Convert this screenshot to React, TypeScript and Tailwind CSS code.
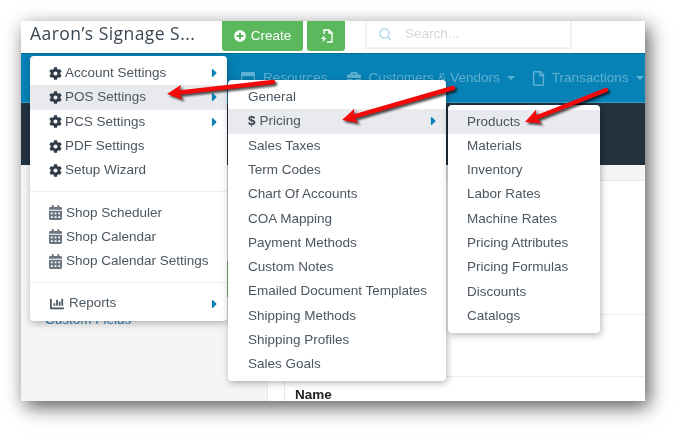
import type { ReactNode } from 'react'
import { FaCog, FaCalendarAlt, FaChartBar, FaCaretRight, FaPlusCircle, FaBriefcase, FaRegFile, FaRegWindowMaximize } from 'react-icons/fa'
import { Search } from 'lucide-react'

type Row = { label: string; icon?: ReactNode; sub?: boolean; active?: boolean } | 'divider'

const cog = <FaCog className="w-[13px] h-[13px] mr-[3px]" />
const cal = <FaCalendarAlt className="w-[13px] h-[15px] mr-[4px] text-[#6b7580]" />

const accountMenu: Row[] = [
  { label: 'Account Settings', icon: cog, sub: true },
  { label: 'POS Settings', icon: cog, sub: true, active: true },
  { label: 'PCS Settings', icon: cog, sub: true },
  { label: 'PDF Settings', icon: cog },
  { label: 'Setup Wizard', icon: cog },
  'divider',
  { label: 'Shop Scheduler', icon: cal },
  { label: 'Shop Calendar', icon: cal },
  { label: 'Shop Calendar Settings', icon: cal },
  'divider',
  { label: 'Reports', icon: <FaChartBar className="w-[16px] h-[14px] mr-[4px] text-[#4a5560]" />, sub: true },
]

const posMenu: Row[] = [
  { label: 'General' },
  { label: 'Pricing', icon: <span className="mr-[4px] font-bold text-[#2f3b47]">$</span>, sub: true, active: true },
  { label: 'Sales Taxes' },
  { label: 'Term Codes' },
  { label: 'Chart Of Accounts' },
  { label: 'COA Mapping' },
  { label: 'Payment Methods' },
  { label: 'Custom Notes' },
  { label: 'Emailed Document Templates' },
  { label: 'Shipping Methods' },
  { label: 'Shipping Profiles' },
  { label: 'Sales Goals' },
]

const pricingMenu: Row[] = [
  { label: 'Products', active: true },
  { label: 'Materials' },
  { label: 'Inventory' },
  { label: 'Labor Rates' },
  { label: 'Machine Rates' },
  { label: 'Pricing Attributes' },
  { label: 'Pricing Formulas' },
  { label: 'Discounts' },
  { label: 'Catalogs' },
]

function Menu({ rows, className }: { rows: Row[]; className: string }) {
  return (
    <div className={`absolute bg-white rounded-[4px] shadow-[1px_2px_7px_rgba(0,0,0,0.3)] ${className}`}>
      {rows.map((row, i) =>
        row === 'divider' ? (
          <div key={i} className="h-px my-[8.5px] bg-[#eceef0]" />
        ) : (
          <div
            key={row.label}
            className={`h-[24.3px] flex items-center pl-[19px] pr-[8px] text-[13.5px] text-[#4b5661] ${row.active ? 'bg-[#e9eaee]' : ''}`}
          >
            <span className="flex items-center text-[#2f3b47]">{row.icon}</span>
            <span>{row.label}</span>
            {row.sub && <FaCaretRight className="ml-auto w-[9px] h-[14px] text-[#0a84b8]" />}
          </div>
        )
      )}
    </div>
  )
}

function Arrow({ x1, y1, x2, y2 }: { x1: number; y1: number; x2: number; y2: number }) {
  const len = Math.hypot(x2 - x1, y2 - y1)
  const ux = (x2 - x1) / len
  const uy = (y2 - y1) / len
  const bx = x2 - ux * 15
  const by = y2 - uy * 15
  const head = `${x2},${y2} ${bx - uy * 7.5},${by + ux * 7.5} ${bx + ux * 3},${by + uy * 3} ${bx + uy * 7.5},${by - ux * 7.5}`
  return (
    <g>
      <line x1={x1} y1={y1} x2={bx + ux * 2} y2={by + uy * 2} stroke="#f20a0a" strokeWidth="4.5" strokeLinecap="round" />
      <polygon points={head} fill="#f20a0a" />
    </g>
  )
}

function Caret() {
  return <span className="ml-[7px] inline-block border-x-[4px] border-x-transparent border-t-[4px] border-t-[#5fb0d2]" />
}

export default function App() {
  return (
    <div className="w-[687px] h-[443px] bg-white pl-[21px] pt-[21px] overflow-hidden font-['Liberation_Sans',Arial,sans-serif]">
      <div className="relative w-[624px] h-[380px] bg-white flex flex-col overflow-hidden blur-[0.35px] shadow-[4px_6px_18px_rgba(0,0,0,0.65)]">
        {/* Top bar */}
        <header className="h-[32px] flex items-start shrink-0">
          <div className="w-[201px] pl-[9px] text-[17.5px] leading-[24px] tracking-[0.45px] text-[#3a4753] font-['Open_Sans',sans-serif] whitespace-nowrap">
            Aaron’s Signage S...
          </div>
          <button className="w-[81px] h-[30px] bg-[#5cb85c] rounded-b-[3px] flex items-center justify-center gap-[5px] text-white text-[13.5px]">
            <FaPlusCircle className="w-[12px] h-[12px]" />
            Create
          </button>
          <button className="ml-[4px] w-[38px] h-[30px] bg-[#5cb85c] rounded-b-[3px] flex items-center justify-center">
            <svg width="14" height="14" viewBox="0 0 14 14" fill="none" stroke="white" strokeWidth="1.4">
              <path d="M5 5V1h5l3 3v9H8" />
              <path d="M10 1v3h3" />
              <path d="M5.5 6 2 10h2.5L3.5 13.5 7.5 9H5z" fill="white" stroke="none" />
            </svg>
          </button>
          <div className="ml-[20px] w-[207px] h-[28px] border-x-2 border-b-2 border-[#f0f1f2] flex items-center pl-[11px] text-[13.5px] text-[#d3d7db]">
            <Search className="w-[14px] h-[14px] text-[#b5dcec]" strokeWidth={2.5} />
            <span className="ml-[13px]">Search...</span>
          </div>
        </header>

        {/* Nav */}
        <nav className="h-[50px] shrink-0 bg-[#0782b6] border-t border-[#06709c] border-b border-b-[#3aa0c8] flex items-center pl-[220px] text-[13.5px] whitespace-nowrap text-[#5fb0d2]">
          <FaRegWindowMaximize className="w-[14px] h-[14px] shrink-0" />
          <span className="ml-[8px]">Resources</span>
          <FaBriefcase className="ml-[19px] w-[14px] h-[14px] shrink-0" />
          <span className="ml-[8px]">Customers &amp; Vendors</span>
          <Caret />
          <FaRegFile className="ml-[17px] w-[13px] h-[15px] shrink-0" />
          <span className="ml-[7px]">Transactions</span>
          <Caret />
        </nav>

        <div className="h-[62px] shrink-0 bg-[#22323f]" />

        {/* Body */}
        <div className="flex-1 flex min-h-0">
          <aside className="w-[247px] shrink-0 bg-[#f4f4f4] border-r border-[#e6e6e6] pt-[96px]">
            <div className="ml-[9px] h-[36px] w-[198px] bg-[#7cc47c]" />
            <div className="pl-[24px] pt-[15px] text-[13.5px] leading-[16px] text-[#2c7fb0]">Custom Fields</div>
          </aside>
          <main className="flex-1 flex flex-col">
            <div className="h-[15px] bg-[#f5f5f5] border-b border-[#e8e8e8] shrink-0 box-content" />
            <div className="h-[134px] border-b border-[#eeeeee] shrink-0" />
            <div className="h-[62px] border-b border-[#eeeeee] shrink-0" />
            <div className="ml-[16px] flex-1 border-l border-[#e8e8e8] pl-[10px] pt-[10px] text-[13.5px] leading-[16px] font-bold text-[#222222]">
              Name
            </div>
          </main>
        </div>

        {/* Dropdowns */}
        <Menu rows={accountMenu} className="left-[9px] top-[35px] w-[197px] h-[265px] pt-[5px]" />
        <Menu rows={posMenu} className="left-[207px] top-[59px] w-[218px] h-[301px] pt-[5px] [&>div]:pl-[20px]" />
        <Menu rows={pricingMenu} className="left-[427px] top-[84px] w-[152px] h-[228px] pt-[4.5px]" />

        {/* Annotation arrows */}
        <svg className="absolute left-0 top-0 drop-shadow-[2px_2px_1px_rgba(0,0,0,0.7)]" width="624" height="380">
          <Arrow x1={252} y1={61} x2={146} y2={73} />
          <Arrow x1={432} y1={67} x2={321} y2={99} />
          <Arrow x1={585} y1={69} x2={504} y2={101} />
        </svg>
      </div>
    </div>
  )
}
